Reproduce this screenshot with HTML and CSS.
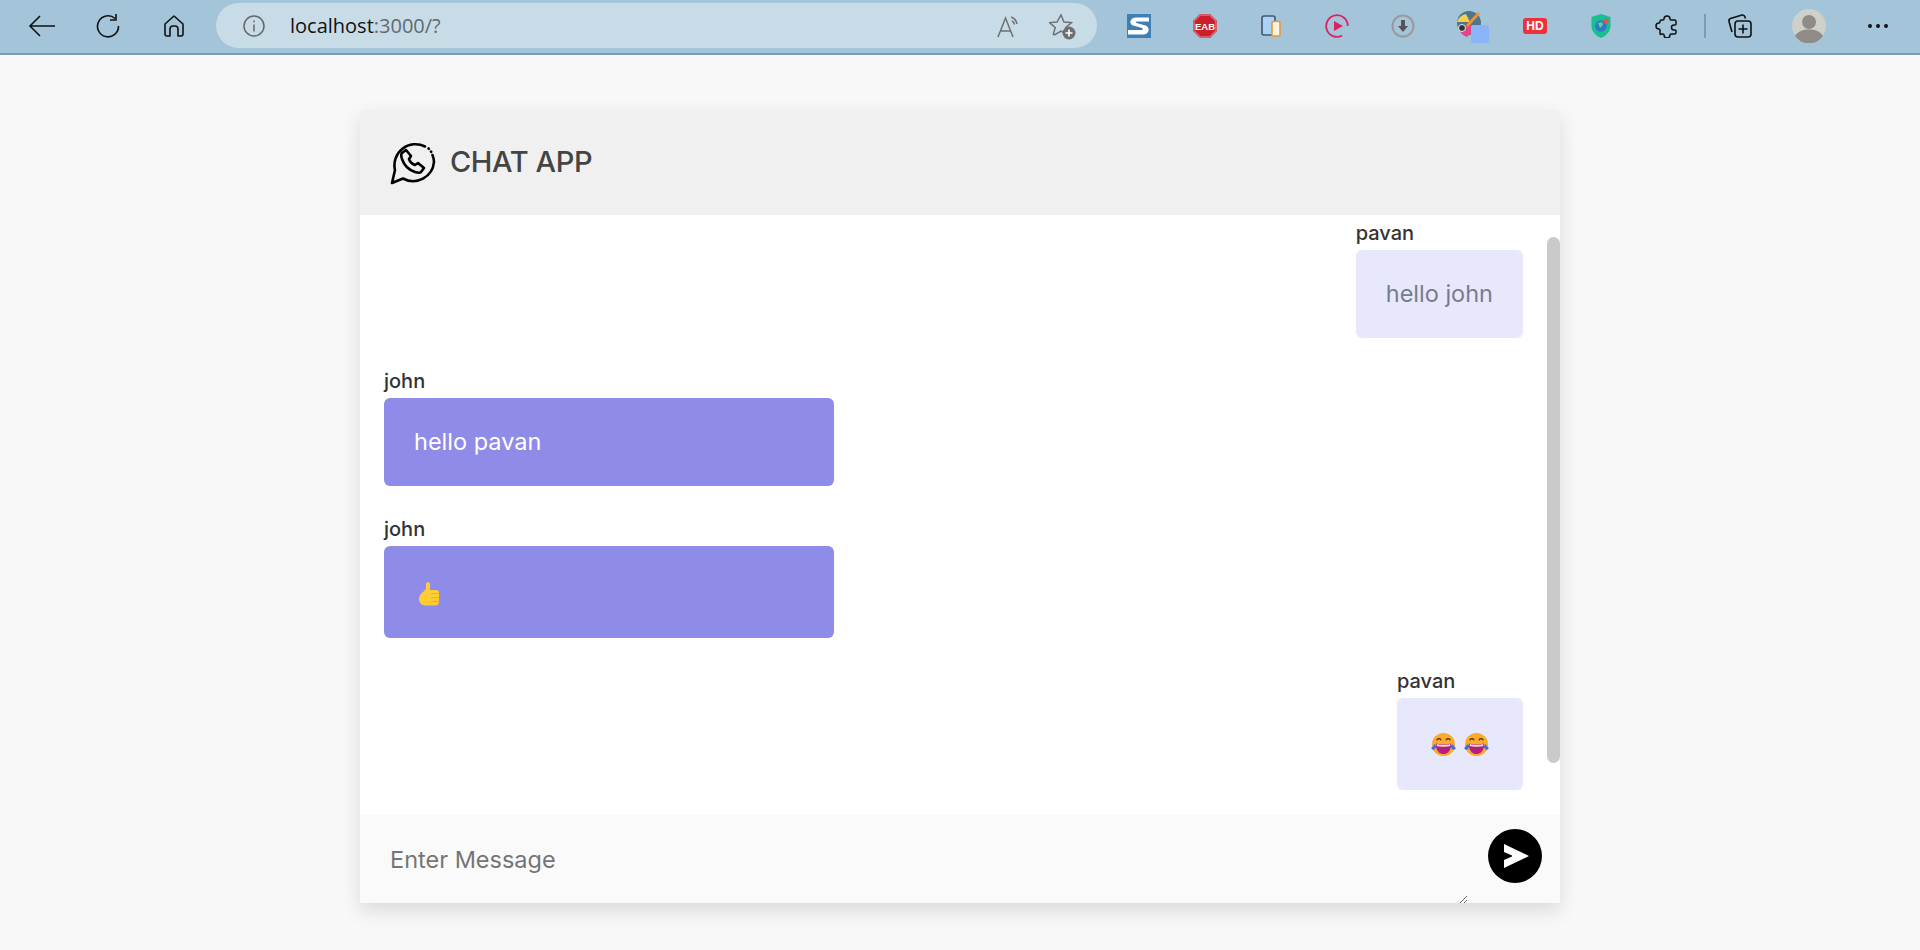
FILE: index.html
```html
<!DOCTYPE html>
<html>
<head>
	<meta charset="UTF-8">
	<title>Chat App</title>
	<link rel="stylesheet" href="styles.css">
</head>
<body>
	<!-- browser toolbar -->
	<div class="toolbar">
		<div class="nav">
			<span class="slot"><svg width="30" height="26" viewBox="0 0 30 26" fill="none" stroke="#111" stroke-width="1.6"><path d="M28 13H3M13 3L3 13l10 10"/></svg></span>
			<span class="slot"><svg width="26" height="26" viewBox="0 0 26 26" fill="none" stroke="#111" stroke-width="1.6"><path d="M20 5.500A10.500 10.500 0 1 0 23.500 13"/><path d="M21 1v6h-6"/></svg></span>
			<span class="slot"><svg width="22" height="26" viewBox="0 0 22 26" fill="none" stroke="#111" stroke-width="1.6" stroke-linejoin="round"><path d="M2 11L11 3l9 8v10a2 2 0 0 1-2 2h-3v-7a3 3 0 0 0-3-3h-2a3 3 0 0 0-3 3v7H4a2 2 0 0 1-2-2z"/></svg></span>
		</div>
		<div class="address">
			<svg class="info" width="24" height="24" viewBox="0 0 24 24" fill="none" stroke="#666" stroke-width="1.5"><circle cx="12" cy="12" r="10"/><path d="M12 10.500v7M12 6.500v1.800"/></svg>
			<span class="url">localhost<span class="url-dim">:3000/?</span></span>
			<svg class="read" width="26" height="26" viewBox="0 0 26 26" fill="none" stroke="#6f6f6f" stroke-width="1.500"><path d="M2 24L9.500 5 17 24M4.500 18h10"/><path d="M15 4a9 9 0 0 1 6 7M16 8a5 5 0 0 1 2.500 3.500"/></svg>
			<svg class="fav" width="28" height="28" viewBox="0 0 28 28"><path d="M12 3l3 7 7.500.6-5.700 4.900 1.800 7.300L12 19l-6.500 4-1.200-.6 1.900-7-5.700-4.800 7.500-.6z" fill="none" stroke="#6f6f6f" stroke-width="1.500"/><circle cx="20" cy="21" r="6.500" fill="#6f6f6f"/><path d="M20 17.500v7M16.500 21h7" stroke="#fff" stroke-width="1.600"/></svg>
		</div>
		<div class="exts">
			<span class="slot"><svg width="24" height="24" viewBox="0 0 24 24"><rect width="24" height="24" fill="#3f7fb5"/><path d="M22 3.500H9C3 3.500 1.500 10 6 11.500l9 2.500c1.500.5 1 2-1 2H1v4.500h15c6 0 8-6.500 2.500-9L9.500 9c-1-.5-.8-1.500.5-1.500h12z" fill="#fff"/></svg></span>
			<span class="slot"><svg width="24" height="24" viewBox="0 0 24 24"><path d="M7 0h10l7 7v10l-7 7H7l-7-7V7z" fill="#c9202c"/><path d="M7.400 1h9.200L23 7.400v9.200L16.600 23H7.400L1 16.600V7.400z" fill="none" stroke="#eb9aa0"/><text x="12" y="16" class="eab">EAB</text></svg></span>
			<span class="slot"><svg width="20" height="22" viewBox="0 0 20 22"><rect x="1" y="1" width="13" height="19" rx="2" fill="#a9d2f5" stroke="#44586b" stroke-width="1.600"/><rect x="11" y="6.500" width="8" height="14.500" rx="1.500" fill="#fff4e0" stroke="#e8983f" stroke-width="1.600"/></svg></span>
			<span class="slot"><svg width="24" height="24" viewBox="0 0 24 24"><path d="M22.800 12A10.800 10.800 0 1 0 17 21.600" fill="none" stroke="#d9245f" stroke-width="1.800"/><path d="M9 7l9 5-9 5z" fill="#d9245f"/></svg></span>
			<span class="slot"><svg width="24" height="24" viewBox="0 0 24 24"><circle cx="12" cy="12" r="10.500" fill="none" stroke="#9a9a9a" stroke-width="2"/><path d="M10 6h4v6h3l-5 6-5-6h3z" fill="#555"/></svg></span>
			<span class="slot"><svg class="paint" width="34" height="34" viewBox="0 0 34 34"><circle cx="14" cy="14" r="12" fill="#4b7690"/><path d="M2 13a12 12 0 0 1 9-8l4 8z" fill="#f4d04a"/><path d="M4 20l11-6 3 9-6 5a12 12 0 0 1-8-8z" fill="#e6458a"/><path d="M12 17L24 4" stroke="#f0912f" stroke-width="3"/><circle cx="7" cy="19" r="3.500" fill="#333" stroke="#eee"/><rect x="16" y="16" width="18" height="18" rx="2" fill="#8ab4f8"/></svg></span>
			<span class="slot"><span class="hd">HD</span></span>
			<span class="slot"><svg width="20" height="24" viewBox="0 0 20 24"><path d="M10 0l9.500 3v9c0 6-5 10-9.500 12C5.500 22 .5 18 .5 12V3z" fill="#17c08f"/><circle cx="10" cy="12" r="5.800" fill="#2f77c9"/><path d="M7 9l4-1 1 3-3 3z" fill="#5ed08a"/><circle cx="15" cy="7" r="2.500" fill="#e8505b"/></svg></span>
			<span class="slot"><svg width="24" height="24" viewBox="0 0 24 24" fill="none" stroke="#111" stroke-width="1.500" stroke-linejoin="round"><path d="M9 5a3 3 0 1 1 6 0c0 .7.300 1 1 1h3.500c.8 0 1.500.7 1.500 1.500V10c0 .7-.5 1-1 1h-1a2.500 2.500 0 0 0 0 5h1c.5 0 1 .4 1 1v1.500c0 .8-.7 1.500-1.500 1.500H16c-.7 0-1 .4-1 1a3 3 0 1 1-6 0c0-.6-.3-1-1-1H6.500C5.700 21 5 20.300 5 19.500V16c0-.6-.5-1-1-1a3 3 0 1 1 0-6c.5 0 1-.4 1-1V7.500C5 6.700 5.700 6 6.500 6H8c.7 0 1-.3 1-1z"/></svg></span>
			<span class="sep"></span>
			<span class="slot"><svg width="26" height="26" viewBox="0 0 26 26" fill="none" stroke="#111" stroke-width="1.600"><rect x="8" y="8" width="16" height="16" rx="3"/><path d="M16 11.500v9M11.500 16h9"/><path d="M5 19L2 8.500C1.600 7 2.300 6 3.500 5.500L15 2c1.500-.3 2.500.5 3 2l.5 1.500"/></svg></span>
			<span class="slot avatar"><svg width="34" height="34" viewBox="0 0 34 34"><circle cx="17" cy="17" r="17" fill="#cfcfcc"/><circle cx="17" cy="13" r="7" fill="#8f8b87"/><path d="M3 27c3-5 8-6.500 14-6.500S28 22 31 27a17 17 0 0 1-28 0z" fill="#8f8b87"/></svg></span>
			<span class="slot more"><i></i><i></i><i></i></span>
		</div>
	</div>

	<div class="page">
		<div class="card">
			<div class="card-header">
				<svg class="logo" width="46" height="46" viewBox="0 0 46 46" fill="none" stroke="#000" stroke-width="2.600" stroke-linecap="round" stroke-linejoin="round">
					<path d="M35 7.500A21 21 0 0 0 5 31L2 44l11-4.500A21 21 0 0 0 44 23a21 21 0 0 0-1.500-7"/>
					<path d="M38.500 9.500l.4.400M41 12.500l.2.300"/>
					<path d="M16 11l-4 3c-1 1-1 3 0 6 2 6 7 11 13 13 3 1 5 1 6 0l3-4-6-5-3 2c-3-1-5-3-6-6l2-3z"/>
				</svg>
				<span class="title">CHAT APP</span>
			</div>

			<div class="messages">
				<div class="msg mine">
					<div class="who">pavan</div>
					<div class="bubble">hello john</div>
				</div>
				<div class="msg theirs">
					<div class="who">john</div>
					<div class="bubble">hello pavan</div>
				</div>
				<div class="msg theirs">
					<div class="who">john</div>
					<div class="bubble emoji-bubble">
						<svg width="20" height="24" viewBox="0 0 20 24"><path d="M7 2c0-2.500 4-2.500 4 0v6h6.500c1.500 0 2.500 1 2.500 2v10c0 2-1.500 3.500-3.500 3.500H7c-4 0-7-2.500-7-7 0-3 2-5 4-6.500 2-1.500 3-3 3-5z" fill="#ffcc33"/><path d="M12 11.500h8M12 15.500h8M12 19.500h8" stroke="#f8ad2a" stroke-width="1" fill="none"/></svg>
					</div>
				</div>
				<div class="msg mine">
					<div class="who">pavan</div>
					<div class="bubble emoji-bubble laugh">
						<svg width="25" height="25" viewBox="0 0 26 26">
							<symbol id="laugh" viewBox="0 0 26 26">
								<circle cx="13" cy="13" r="12" fill="#fcaa2b"/>
								<path d="M5 12c5 1.500 11 1.500 16 0 0 7-3 11-8 11S5 19 5 12z" fill="#b5207f"/>
								<path d="M6 12.500c4 1.200 10 1.200 14 0v2c-4 1-10 1-14 0z" fill="#fbe3d6"/>
								<path d="M6 8.500c1-2 3.500-2 4.500 0M15.500 8.500c1-2 3.500-2 4.500 0" fill="none" stroke="#3a2a1a" stroke-width="1.300"/>
								<path d="M0 17l4-4.500 2 3-3.500 3.500zM26 17l-4-4.500-2 3 3.500 3.500z" fill="#3f6fe8"/>
							</symbol>
							<use href="#laugh"/>
						</svg>
						<svg width="25" height="25" viewBox="0 0 26 26"><use href="#laugh"/></svg>
					</div>
				</div>
				<div class="thumb"></div>
			</div>

			<div class="composer">
				<textarea class="input" placeholder="Enter Message"></textarea>
				<button class="send" type="button">
					<svg width="25" height="24" viewBox="0 0 25 24"><path d="M0 0l25 12L0 24v-8l8-3.500v-1L0 8z" fill="#fff"/></svg>
				</button>
			</div>
		</div>
	</div>
</body>
</html>
```

FILE: styles.css
```css
* {
	box-sizing: border-box;
}
body {
	margin: 0;
	background-color: #f8f8f8;
	font-family: "Inter", "Noto Sans", sans-serif;
}

/* toolbar */
.toolbar {
	height: 55px;
	display: flex;
	align-items: center;
	padding: 0 9px 2px;
	background-color: #a3c4d9;
	border-bottom: 2px solid #7b9db1;
}
.nav, .exts {
	display: flex;
	align-items: center;
	flex: none;
}
.slot {
	width: 66px;
	flex: none;
	display: flex;
	justify-content: center;
	align-items: center;
}
.address {
	width: 881px;
	height: 45px;
	flex: none;
	margin: 0 9px;
	padding: 0 20px 0 26px;
	display: flex;
	align-items: center;
	background-color: #c8dce8;
	border-radius: 23px;
}
.url {
	margin-left: 24px;
	flex: 1;
	font-family: "Open Sans", sans-serif;
	font-size: 20px;
	color: #111;
}
.url-dim {
	color: #5f6a72;
}
.read {
	margin-right: 27px;
}
.eab {
	font: bold 9.500px "Liberation Sans", sans-serif;
	fill: #fff;
	text-anchor: middle;
}
.paint {
	margin-left: 6px;
}
.hd {
	padding: 1px 3px;
	font: bold 12px "Liberation Sans", sans-serif;
	color: #fff;
	background-color: #ef2f3c;
	border-radius: 3px;
}
.sep {
	width: 2px;
	height: 24px;
	margin: 0 1px 0 4px;
	background-color: #7b9db1;
}
.avatar {
	margin-left: 3px;
}
.more {
	gap: 4px;
	margin-left: 3px;
}
.more i {
	width: 4px;
	height: 4px;
	background-color: #111;
	border-radius: 50%;
}

/* chat card */
.page {
	display: flex;
	justify-content: center;
	padding: 55px 0 47px;
}
.card {
	width: 1200px;
	height: 793px;
	display: flex;
	flex-direction: column;
	border-radius: 4px 4px 0 0;
	box-shadow: 0 8px 20px rgba(0, 0, 0, 0.12);
}
.card-header {
	height: 105px;
	display: flex;
	align-items: center;
	gap: 14px;
	padding: 0 30px 2px;
	background-color: #f0f0f0;
	border-radius: 4px 4px 0 0;
}
.title {
	font-size: 29px;
	font-weight: 450;
	letter-spacing: -0.4px;
	color: #444;
}
.messages {
	position: relative;
	height: 600px;
	padding: 5px 37px 0 24px;
	display: flex;
	flex-direction: column;
	background-color: #fff;
}
.msg {
	display: flex;
	flex-direction: column;
}
.mine {
	align-self: flex-end;
}
.theirs {
	width: 450px;
}
.msg + .msg {
	margin-top: 30px;
}
.who {
	height: 30px;
	line-height: 26px;
	font-size: 20px;
	font-weight: 450;
	color: #333;
}
.bubble {
	height: 88px;
	padding: 0 30px 2px;
	display: flex;
	align-items: center;
	font-size: 23.500px;
	color: #fff;
	background-color: #8f8be8;
	border-radius: 6px;
}
.mine .bubble {
	color: #777b8f;
	background-color: #e8e8fd;
}
.emoji-bubble {
	height: 92px;
	padding: 3px 0 0 35px;
}
.mine .laugh {
	gap: 8px;
	padding: 0 34px;
}
.thumb {
	position: absolute;
	top: 22px;
	right: 0;
	width: 13px;
	height: 526px;
	background-color: #cacaca;
	border-radius: 7px;
}

/* message box */
.composer {
	height: 88px;
	display: flex;
	overflow: hidden;
	background-color: #fafafa;
}
.input {
	width: 1108px;
	height: 89px;
	flex: none;
	padding: 30px 30px 0;
	border: none;
	outline: none;
	font-family: "Inter", sans-serif;
	font-size: 23.500px;
	color: #333;
	background-color: #fafafa;
}
.input::placeholder {
	color: #757575;
}
.send {
	width: 54px;
	height: 54px;
	margin: 14px 0 0 20px;
	flex: none;
	display: flex;
	justify-content: center;
	align-items: center;
	padding: 0 0 0 2px;
	border: none;
	border-radius: 50%;
	background-color: #000;
}
```
